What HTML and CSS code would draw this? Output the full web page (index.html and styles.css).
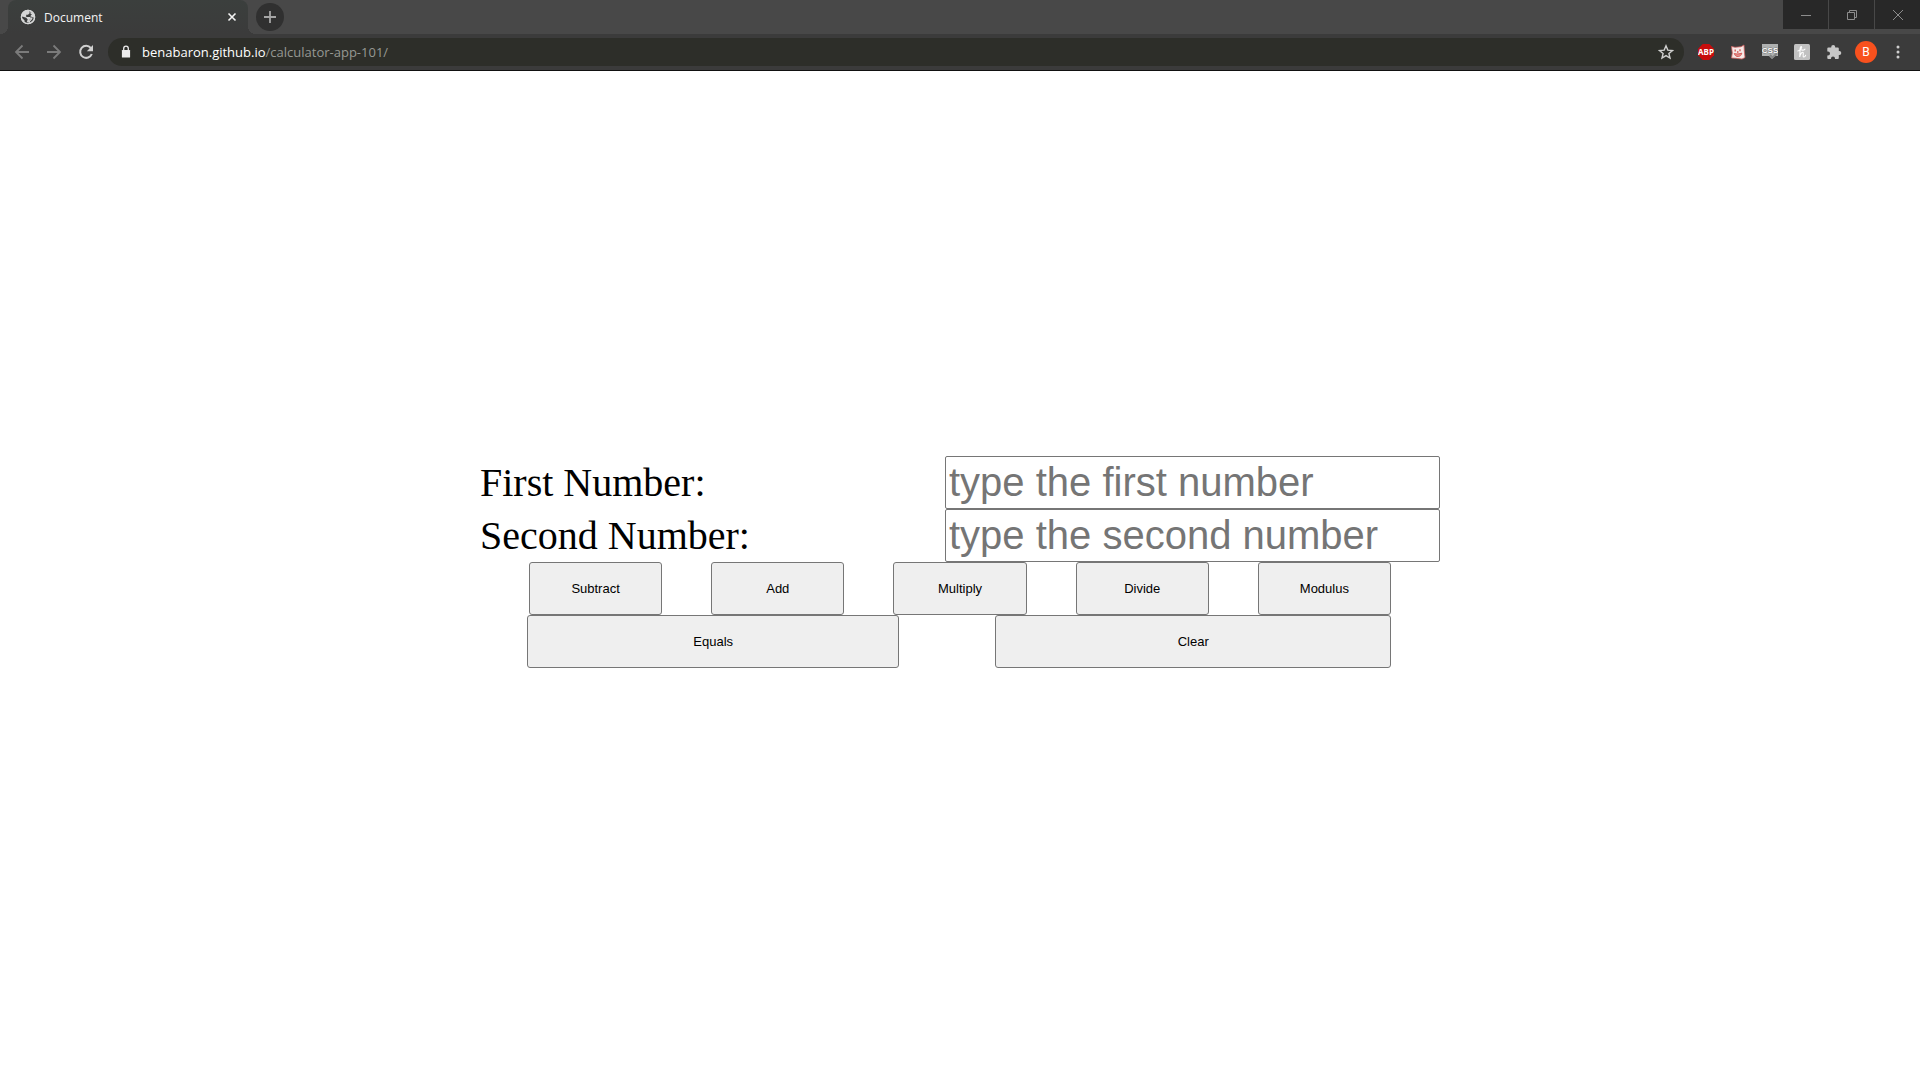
FILE: index.html
```html
<!DOCTYPE html>
<html lang="en">
<head>
<meta charset="utf-8">
<title>Document</title>
<link rel="stylesheet" href="styles.css">
</head>
<body>
<header class="browser">
  <div class="tab-strip">
    <div class="tab">
      <svg class="tab-icon" viewBox="0 0 16 16" width="16" height="16" aria-hidden="true"><circle cx="8" cy="8" r="7.2" fill="#d5d6d6"/><path d="M9 2.300 9.800 4 8 5.800H6.200v2.200h4l1 1.500-1.500 1-.7 2.200-1.200 1-1-1.500 1-1.500-1.500-2L2.200 7.500l-.3 1.500 2.600 2.200v2l2.500 1.200h2l4.500-3.400L14 8l-2.300-.8.500-2.700-2-1.900z" fill="#3b3d3d"/><path d="M10.500 3.500 12.500 5.500 11.300 7l3 1.200M9 14l.5-2 2-2 .5-1.500" fill="none" stroke="#d5d6d6" stroke-width="1.300"/><circle cx="8" cy="8" r="6.600" fill="none" stroke="#d5d6d6" stroke-width="1.300"/></svg>
      <span class="tab-title">Document</span>
      <button class="icon-button tab-close" type="button" aria-label="Close tab"><svg viewBox="0 0 16 16" width="16" height="16"><path d="m4.500 4.500 7 7m0-7-7 7" stroke="#f4f4f4" stroke-width="1.600"/></svg></button>
    </div>
    <button class="icon-button new-tab" type="button" aria-label="New tab"><svg viewBox="0 0 16 16" width="16" height="16"><path d="M8 2v12M2 8h12" stroke="#a5a5a5" stroke-width="1.8"/></svg></button>
    <div class="window-controls">
      <button class="window-button" type="button" aria-label="Minimize"><svg viewBox="0 0 12 12" width="12" height="12"><path d="M1 6.500h10" stroke="#8d8d8d"/></svg></button>
      <button class="window-button" type="button" aria-label="Restore"><svg viewBox="0 0 12 12" width="12" height="12"><path d="M1.500 3.500h7v7h-7zM3.500 3.500v-2h7v7h-2" fill="none" stroke="#8d8d8d"/></svg></button>
      <button class="window-button" type="button" aria-label="Close"><svg viewBox="0 0 12 12" width="12" height="12"><path d="m1 1 10 10M11 1 1 11" stroke="#8d8d8d"/></svg></button>
    </div>
  </div>
  <div class="toolbar">
    <nav class="history">
      <button class="icon-button" type="button" aria-label="Back"><svg viewBox="0 0 16 16" width="16" height="16"><path d="M15 8H2m6.500-6.500L2 8l6.500 6.500" fill="none" stroke="#7b7b7b" stroke-width="1.800"/></svg></button>
      <button class="icon-button" type="button" aria-label="Forward"><svg viewBox="0 0 16 16" width="16" height="16"><path d="M1 8h13M7.500 1.500 14 8l-6.500 6.500" fill="none" stroke="#7b7b7b" stroke-width="1.800"/></svg></button>
      <button class="icon-button" type="button" aria-label="Reload"><svg viewBox="0 0 16 16" width="16" height="16"><path d="M12.800 4A6 6 0 1 0 13.800 10" fill="none" stroke="#d0d0d0" stroke-width="2"/><path d="M15 1v6.200H8.800z" fill="#d0d0d0"/></svg></button>
    </nav>
    <div class="address-bar">
      <svg viewBox="0 0 16 16" width="16" height="16" aria-hidden="true"><path d="M4.500 6h7q.6 0 .6.600v6.300q0 .6-.6.600h-7q-.6 0-.6-.6V6.600q0-.6.600-.6z" fill="#ececec"/><path d="M5.700 7V4.500a2.300 2.300 0 0 1 4.600 0V7" fill="none" stroke="#ececec" stroke-width="1.300"/></svg>
      <div class="url" role="textbox" contenteditable="true" spellcheck="false" aria-label="Address">benabaron.github.io<span class="url-path">/calculator-app-101/</span></div>
      <button class="icon-button" type="button" aria-label="Bookmark this page"><svg viewBox="0 0 16 16" width="16" height="16"><path d="m8 1.800 1.800 4.300 4.700.4-3.600 3 1.100 4.600-4-2.500-4 2.500 1.100-4.600-3.600-3 4.700-.4z" fill="none" stroke="#d0d0cf" stroke-width="1.400"/></svg></button>
    </div>
    <div class="extensions">
      <button class="icon-button" type="button" aria-label="Adblock Plus"><svg viewBox="0 0 16 16" width="16" height="16"><path d="M4.700 0h6.600L16 4.700v6.600L11.300 16H4.700L0 11.300V4.700z" fill="#c70d0d"/><text class="badge-text" x="8" y="11" text-anchor="middle">ABP</text></svg></button>
      <button class="icon-button" type="button" aria-label="Cat extension"><svg viewBox="0 0 16 16" width="16" height="16"><path d="M1.500 2.500 5 3.300l6-.6 3-1.700.3 6L15 13.500 12 15l-6-.7-4.500-.3L2.300 9z" fill="#f6e9e7" stroke="#d2605e" stroke-width=".8"/><path d="M4.200 9.500c2.500.6 5.300.5 7.600-.4-.5 4.200-6.400 4.900-7.600.4z" fill="#e58c89" stroke="#cf4b48" stroke-width=".8"/><path d="M5.200 5.500v2M10 5.200v2M7 8h1.500" stroke="#d2504d" stroke-width="1.300"/></svg></button>
      <button class="icon-button" type="button" aria-label="CSS viewer"><svg viewBox="0 0 16 16" width="16" height="16"><path d="M0 0h16v12h-3l-3 3-3-3H0z" fill="#aeb0b0"/><text class="css-text" x="8" y="9" text-anchor="middle">CSS</text><path d="m8 11 2.500 2.500L15 9.500" fill="none" stroke="#858686" stroke-width="2"/></svg></button>
      <button class="icon-button" type="button" aria-label="Honey"><svg viewBox="0 0 16 16" width="16" height="16"><rect width="16" height="16" rx="1.500" fill="#c1c1c1"/><path d="M3.800 7C6.500 6.500 8.300 3.500 7.500 2.700S5.700 4.500 6 8l-.3 5C6.200 10 8 7.800 9 8.300s-.8 4.400.7 4.700c1 .1 1.600-.8 1.900-1.700M7 5.700c1.500.7 3 .4 4-.6" fill="none" stroke="#fff" stroke-width="1.100" stroke-linecap="round"/></svg></button>
      <button class="icon-button" type="button" aria-label="Extensions"><svg viewBox="0 0 16 16" width="16" height="16"><path d="M2.500 3.500H5.200V3a2 2 0 0 1 4 0v.5h2.600q1 0 1 1v2.600h.5a2 2 0 0 1 0 4h-.5v3q0 1-1 1H9v-.7a2 2 0 0 0-4 0v.7H2.300q-1 0-1-1v-2.700h.7a2 2 0 0 0 0-4h-.7V4.500q0-1 1.200-1z" fill="#c7c7c7"/></svg></button>
      <button class="icon-button avatar" type="button" aria-label="Profile">B</button>
      <button class="icon-button" type="button" aria-label="Menu"><svg viewBox="0 0 16 16" width="16" height="16" fill="#cfcfcf"><circle cx="8" cy="3" r="1.500"/><circle cx="8" cy="8" r="1.500"/><circle cx="8" cy="13" r="1.500"/></svg></button>
    </div>
  </div>
</header>
<main class="page">
  <form class="calculator">
    <div class="field">
      <label for="first">First Number:</label>
      <input id="first" type="text" placeholder="type the first number">
    </div>
    <div class="field">
      <label for="second">Second Number:</label>
      <input id="second" type="text" placeholder="type the second number">
    </div>
    <div class="operators">
      <button class="key" type="button">Subtract</button>
      <button class="key" type="button">Add</button>
      <button class="key" type="button">Multiply</button>
      <button class="key" type="button">Divide</button>
      <button class="key" type="button">Modulus</button>
    </div>
    <div class="actions">
      <button class="key" type="button">Equals</button>
      <button class="key" type="reset">Clear</button>
    </div>
  </form>
</main>
</body>
</html>
```

FILE: styles.css
```css
* {
  box-sizing: border-box;
}

body {
  display: flex;
  flex-direction: column;
  min-height: 100vh;
  margin: 0;
  background: #fff;
  color: #000;
  font-family: "Liberation Serif", "Times New Roman", serif;
}

svg {
  display: block;
}

.browser {
  border-bottom: 1px solid #111;
  background: #3b3b3b;
  font-family: "Open Sans", "Noto Sans", sans-serif;
}

.icon-button {
  display: flex;
  flex: none;
  align-items: center;
  justify-content: center;
  width: 16px;
  height: 16px;
  padding: 0;
  border: 0;
  background: none;
}

/* Tab strip */
.tab-strip {
  display: flex;
  height: 34px;
  background: #484848;
}

.tab {
  display: flex;
  align-items: center;
  gap: 8px;
  width: 240px;
  margin-left: 8px;
  padding: 0 8px 0 12px;
  border-radius: 8px 8px 0 0;
  background: linear-gradient(#3b3f3d, #3b3b3b);
  position: relative;
}

/* Curved feet that join the tab to the toolbar */
.tab::before,
.tab::after {
  content: "";
  position: absolute;
  bottom: 0;
  width: 8px;
  height: 8px;
}

.tab::before {
  right: 100%;
  background: radial-gradient(circle at 0 0, transparent 8px, #3b3b3b 8px);
}

.tab::after {
  left: 100%;
  background: radial-gradient(circle at 100% 0, transparent 8px, #3b3b3b 8px);
}

.tab-title {
  flex: 1;
  color: #f4f4f4;
  font-size: 12px;
}

.new-tab {
  align-self: center;
  width: 28px;
  height: 28px;
  margin-left: 8px;
  border-radius: 50%;
  background: #303030;
}

.window-controls {
  display: flex;
  gap: 1px;
  height: 29px;
  margin-left: auto;
}

.window-button {
  display: flex;
  align-items: center;
  justify-content: center;
  width: 45px;
  padding: 0;
  border: 0;
  background: #282828;
}

/* Toolbar */
.toolbar {
  display: flex;
  align-items: center;
  height: 36px;
  padding: 0 14px;
}

.history {
  display: flex;
  gap: 16px;
  margin-right: 14px;
}

.address-bar {
  display: flex;
  flex: 1;
  align-items: center;
  gap: 8px;
  height: 28px;
  padding: 0 10px;
  border-radius: 14px;
  background: #2d2e29;
}

.url {
  flex: 1;
  color: #fff;
  font-size: 13px;
  line-height: 18px;
}

.url-path {
  color: #969893;
}

.extensions {
  display: flex;
  align-items: center;
  gap: 16px;
  margin-left: 14px;
}

.badge-text {
  fill: #fff;
  font: 700 8px "Noto Sans", sans-serif;
}

.css-text {
  fill: #fff;
  stroke: #707171;
  stroke-width: 1px;
  paint-order: stroke;
  font: 700 8px "Liberation Sans", sans-serif;
}

.avatar {
  width: 22px;
  height: 22px;
  margin: 0 -3px;
  border-radius: 50%;
  background: #f8511e;
  color: #fff;
  font: 12px Roboto, sans-serif;
}

/* Calculator */
.page {
  display: flex;
  flex: 1;
  align-items: center;
  justify-content: center;
  padding-bottom: 27px;
}

.calculator {
  width: 50%;
}

.field {
  display: grid;
  grid-template-columns: 465fr 495fr;
  align-items: center;
  font-size: 40px;
}

.field input {
  width: 100%;
  min-width: 0;
  height: 53px;
  padding: 1px 3px;
  border: 1px solid #767676;
  border-radius: 2px;
  background: #fff;
  font: 40px "Liberation Sans", Arial, sans-serif;
}

.field input::placeholder {
  color: #757575;
}

.operators,
.actions {
  display: grid;
  padding: 0 49px;
}

.operators {
  grid-template-columns: repeat(5, 1fr);
  column-gap: 49px;
}

.actions {
  grid-template-columns: 372fr 395fr;
  column-gap: 96px;
  padding-left: 47px;
}

.key {
  height: 53px;
  min-width: 0;
  padding: 0;
  border: 1px solid #767676;
  border-radius: 3px;
  background: #efefef;
  color: #000;
  font: 13px "Liberation Sans", Arial, sans-serif;
}
```
